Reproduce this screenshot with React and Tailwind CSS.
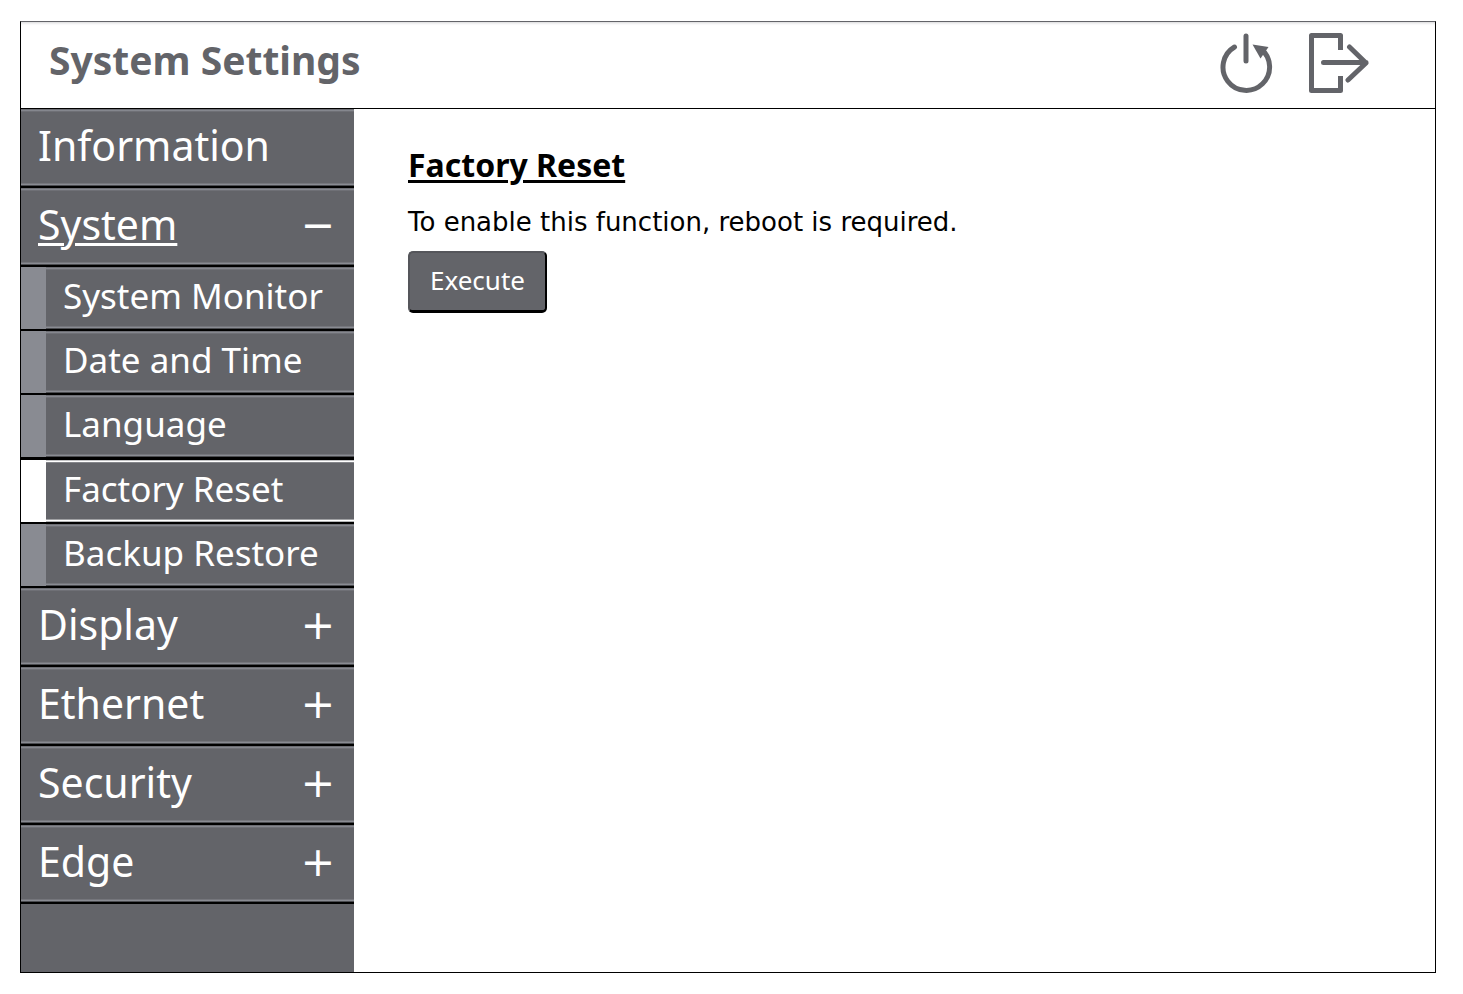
import React, { useState } from "react";

const menu = [
  { name: "Information" },
  {
    name: "System",
    children: [
      "System Monitor",
      "Date and Time",
      "Language",
      "Factory Reset",
      "Backup Restore",
    ],
  },
  { name: "Display", children: [] },
  { name: "Ethernet", children: [] },
  { name: "Security", children: [] },
  { name: "Edge", children: [] },
];

// thin highlight along the top and bottom edge of every menu row
const bevel =
  "shadow-[inset_0_1px_#6c6d73,inset_0_2px_#85878e,inset_0_3px_#6f7076,inset_0_-1px_#4b4c50,inset_0_-2px_#898b92,inset_0_-3px_#75767c]";
const activeBevel =
  "shadow-[inset_0_1px_#c4c4c6,inset_0_2px_#ffffff,inset_0_3px_#85868b,inset_0_-1px_#b4b5b6,inset_0_-2px_#ffffff,inset_0_-3px_#a0a1a4]";

const RebootIcon = () => (
  <svg viewBox="0 0 54 60" className="w-[54px] h-[60px]" fill="none">
    <path
      d="M15.5 14 A23.3 23.3 0 1 0 42 16"
      stroke="#636469"
      strokeWidth="5"
      strokeLinecap="round"
    />
    <path d="M27 3 V28" stroke="#636469" strokeWidth="5" strokeLinecap="round" />
    <path d="M33.5 11.5 L49.5 14 L41.5 25.5 Z" fill="#636469" />
  </svg>
);

const ExitIcon = () => (
  <svg viewBox="0 0 60 60" className="w-[60px] h-[60px]" fill="none">
    <path
      d="M31.5 17 V2.5 H2.5 V57.5 H31.5 V43"
      stroke="#636469"
      strokeWidth="5"
      strokeLinejoin="round"
    />
    <path
      d="M14.5 29.5 H57 M40.5 14 L57 30 L39 47"
      stroke="#636469"
      strokeWidth="5"
      strokeLinecap="round"
      strokeLinejoin="round"
    />
  </svg>
);

const SubItem = ({ name, active, onSelect }) => (
  <li className={`border-b-2 border-black ${active ? "border-t" : ""}`}>
    <button
      type="button"
      onClick={() => onSelect(name)}
      className={`flex w-full h-[62px] text-left text-[35px] leading-[58px] ${
        active ? "bg-white" : "bg-[#898b92]"
      }`}
    >
      <span
        className={`ml-[25px] h-full flex-1 pl-[17px] bg-[#636469] ${
          active ? activeBevel : bevel
        }`}
      >
        {name}
      </span>
    </button>
  </li>
);

const MenuItem = ({ item, open, onToggle, page, onSelect }) => (
  <li>
    <button
      type="button"
      onClick={() => onToggle(item.name)}
      className={`flex w-full h-[79px] justify-between pl-[17px] pr-[19px] border-b-2 border-b-black text-left text-[41px] leading-[72px] ${bevel}`}
    >
      <span className={open ? "underline decoration-3 underline-offset-3" : ""}>
        {item.name}
      </span>
      {item.children && (
        <span className="font-['DejaVu_Sans',sans-serif] leading-[75px]">
          {open ? "−" : "+"}
        </span>
      )}
    </button>
    {open && item.children && (
      <ul>
        {item.children.map((child) => (
          <SubItem
            key={child}
            name={child}
            active={child === page}
            onSelect={onSelect}
          />
        ))}
      </ul>
    )}
  </li>
);

const App = () => {
  const [openMenu, setOpenMenu] = useState("System");
  const [page, setPage] = useState("Factory Reset");

  return (
    <div className="min-h-screen bg-white pt-[21px] pl-5 pr-[27px] pb-[21px] flex flex-col font-['Noto_Sans',sans-serif]">
      <div className="flex-1 flex flex-col border border-black border-t-[#636469]">
        <header className="h-[87px] flex items-start justify-between border-b border-black pl-7 pr-[66px] pt-[11px] shadow-[inset_0_3px_3px_-2px_#d4d4d6]">
          <h1 className="mt-2 text-[39px] leading-[38px] font-bold text-[#636469]">
            System Settings
          </h1>
          <div className="flex gap-9">
            <button type="button" aria-label="Reboot">
              <RebootIcon />
            </button>
            <button type="button" aria-label="Exit">
              <ExitIcon />
            </button>
          </div>
        </header>
        <div className="flex-1 flex">
          <nav className="w-[333px] bg-[#636469] text-white">
            <ul>
              {menu.map((item) => (
                <MenuItem
                  key={item.name}
                  item={item}
                  open={openMenu === item.name}
                  onToggle={setOpenMenu}
                  page={page}
                  onSelect={setPage}
                />
              ))}
            </ul>
          </nav>
          <main className="flex-1 pl-[54px] pt-9 text-black">
            <h2 className="text-[32px] leading-[40px] font-bold underline decoration-3 underline-offset-3">
              {page}
            </h2>
            <p className="mt-4 text-[26px] leading-[42px] font-['DejaVu_Sans',sans-serif]">
              To enable this function, reboot is required.
            </p>
            <button
              type="button"
              className="mt-2 px-5 h-[62px] pb-1 text-[26px] leading-[40px] text-white bg-[#636469] rounded-[5px] border-2 border-[#55565b] border-r-black border-b-3 border-b-black"
            >
              Execute
            </button>
          </main>
        </div>
      </div>
    </div>
  );
};

export default App;
